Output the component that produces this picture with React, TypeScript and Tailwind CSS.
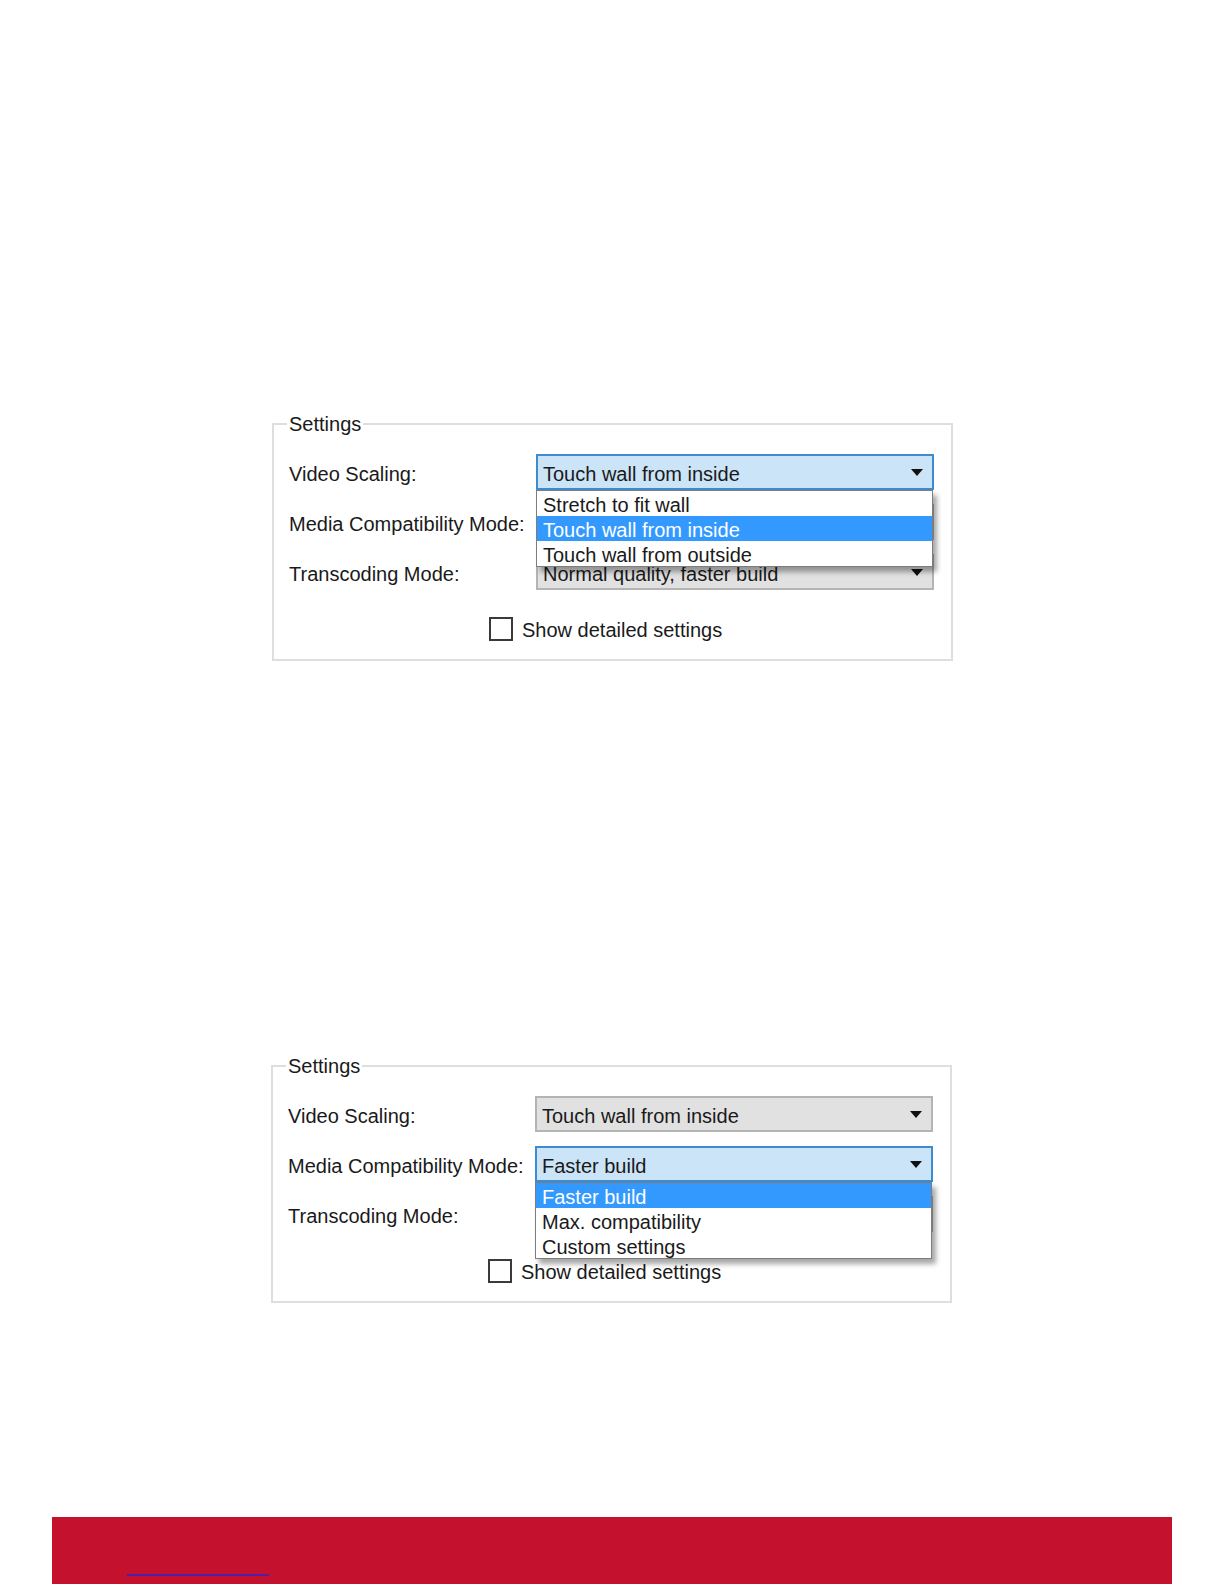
import React from "react";

type ComboProps = {
  value: string;
  open?: boolean;
  items?: string[];
  selected?: number;
};

function Arrow() {
  return (
    <svg width="12" height="7" viewBox="0 0 12 7" className="shrink-0">
      <path d="M0 0 L12 0 L6 7 Z" fill="#111" />
    </svg>
  );
}

function Combo({ value, open, items, selected }: ComboProps) {
  return (
    <div
      className={
        open
          ? "relative flex h-[36px] w-[398px] items-center justify-between border-2 border-[#3f8bcf] bg-[#cce4f7] pl-[5px] pr-[9px]"
          : "relative flex h-[36px] w-[398px] items-center justify-between border-2 border-[#b4b4b4] bg-[#e1e1e1] pl-[5px] pr-[9px]"
      }
    >
      <span className="whitespace-nowrap pt-[4px] text-[#1a1a1a]">{value}</span>
      <Arrow />
      {open && items ? (
        <div className="absolute left-[-2px] top-[34px] z-10 w-[397px] border border-[#7d7d7d] bg-white shadow-[4px_5px_5px_rgba(0,0,0,0.35)]">
          {items.map((it, i) => (
            <div
              key={it}
              className={
                i === selected
                  ? "flex h-[25px] items-center bg-[#3399ff] px-[6px] pt-[3px] whitespace-nowrap text-white"
                  : "flex h-[25px] items-center px-[6px] pt-[3px] whitespace-nowrap text-[#1a1a1a]"
              }
            >
              {it}
            </div>
          ))}
        </div>
      ) : null}
    </div>
  );
}

function SettingsFrame({
  className,
  rows,
}: {
  className: string;
  rows: { label: string; combo: ComboProps }[];
}) {
  return (
    <div
      className={
        "relative w-[681px] border-2 border-[#dedede] pl-[15px] pt-[29px] pb-[18px] " +
        className
      }
    >
      <div className="absolute left-[13px] top-[-13px] bg-white px-[2px] leading-[24px] text-[#1a1a1a]">
        Settings
      </div>
      <div className="grid grid-cols-[247px_398px] gap-y-[14px]">
        {rows.map((r) => (
          <React.Fragment key={r.label}>
            <div className="flex h-[36px] items-center pt-[4px] whitespace-nowrap text-[#1a1a1a]">
              {r.label}
            </div>
            <div className={r.combo.open ? "relative z-20" : "relative z-0"}>
              <Combo {...r.combo} />
            </div>
          </React.Fragment>
        ))}
      </div>
      <div className="mt-[27px] flex h-[24px] items-center pl-[200px]">
        <div className="h-[24px] w-[24px] border-2 border-[#3a3a3a] bg-white" />
        <span className="ml-[9px] pt-[2px] leading-[24px] text-[#1a1a1a]">Show detailed settings</span>
      </div>
    </div>
  );
}

export default function App() {
  return (
    <div
      className="flex h-[1584px] w-[1224px] flex-col overflow-hidden bg-white text-[20px] leading-[24px]"
      style={{ fontFamily: '"Liberation Sans", Arial, sans-serif' }}
    >
      <SettingsFrame
        className="ml-[272px] mt-[423px]"
        rows={[
          {
            label: "Video Scaling:",
            combo: {
              value: "Touch wall from inside",
              open: true,
              items: ["Stretch to fit wall", "Touch wall from inside", "Touch wall from outside"],
              selected: 1,
            },
          },
          { label: "Media Compatibility Mode:", combo: { value: "Faster build" } },
          { label: "Transcoding Mode:", combo: { value: "Normal quality, faster build" } },
        ]}
      />
      <SettingsFrame
        className="ml-[271px] mt-[404px]"
        rows={[
          { label: "Video Scaling:", combo: { value: "Touch wall from inside" } },
          {
            label: "Media Compatibility Mode:",
            combo: {
              value: "Faster build",
              open: true,
              items: ["Faster build", "Max. compatibility", "Custom settings"],
              selected: 0,
            },
          },
          { label: "Transcoding Mode:", combo: { value: "Normal quality, faster build" } },
        ]}
      />
      <div className="mt-auto ml-[52px] h-[67px] w-[1120px] bg-[#c3112e] pt-[57px] pl-[75px]">
        <div className="h-[2px] w-[142px] bg-[#4f1fa8]" />
      </div>
    </div>
  );
}
